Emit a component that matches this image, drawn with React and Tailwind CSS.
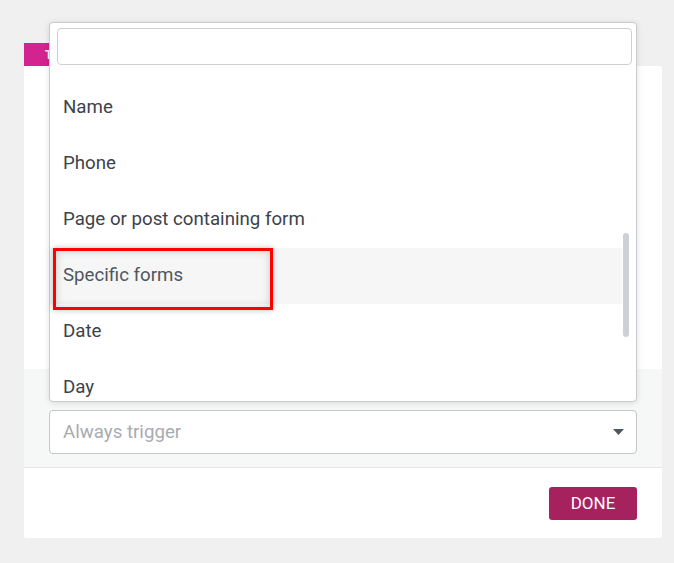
const options = ['Name', 'Phone', 'Page or post containing form', 'Specific forms', 'Date', 'Day'];

const App = () => {
  return (
    <div className="relative min-h-[563px] bg-[#f0f0f0] font-['Roboto',sans-serif]">
      <div className="px-[24px] pt-[43px] pb-[26px]">
        <div className="flex h-[23px] w-[60px] items-center bg-[#d2238f] pl-[21px] text-[12px] font-bold text-white">
          TRIGGER
        </div>
        <div className="w-[638px] rounded-b-[2px] rounded-tr-[2px] bg-white">
          <div className="h-[303px]" />
          <div className="border-b border-[#e6e6e6] bg-[#f6f7f7] px-[25px] pt-[41px] pb-[13px]">
            <div className="flex h-[44px] items-center justify-between rounded-[4px] border border-[#c3c6ca] bg-white pl-[13px] pr-[12px]">
              <span className="text-[18.7px] text-[#a7acb1]">Always trigger</span>
              <svg width="11" height="6" viewBox="0 0 11 6">
                <polygon points="0,0 11,0 5.5,6" fill="#50575e" />
              </svg>
            </div>
          </div>
          <div className="flex justify-end px-[25px] pt-[19px] pb-[18px]">
            <button className="h-[33px] w-[88px] rounded-[3px] bg-[#a6225f] text-[17px] text-white">
              DONE
            </button>
          </div>
        </div>
      </div>

      {/* open select dropdown */}
      <div className="absolute left-[49px] top-[22px] flex h-[380px] w-[588px] flex-col rounded-[4px] border border-[#c8ccd1] bg-white shadow-[0_1px_6px_rgba(0,0,0,0.12)]">
        <div className="pt-[5px] pl-[7px] pr-[4px]">
          <div className="h-[37px] rounded-[4px] border border-[#ccd0d4] bg-white" />
        </div>
        <div className="relative flex-1 overflow-hidden pt-[15px]">
          {options.map((label) => (
            <div
              key={label}
              className={`mr-[14px] flex h-[56px] items-center pb-[2px] pl-[13px] text-[18.7px] ${
                label === 'Specific forms' ? 'bg-[#f6f6f6] text-[#50575e]' : 'text-[#3c434a]'
              }`}
            >
              {label}
            </div>
          ))}
        </div>
        <div className="absolute left-[573px] top-[210px] h-[104px] w-[6px] rounded-full bg-[#cdd1d7]" />
      </div>

      {/* highlight annotation */}
      <div className="absolute left-[53px] top-[248px] h-[62px] w-[220px] border-[3px] border-[#f00] shadow-[0_0_6px_rgba(0,0,0,0.25),inset_0_0_8px_rgba(0,0,0,0.18)]" />
    </div>
  );
};

export default App;
